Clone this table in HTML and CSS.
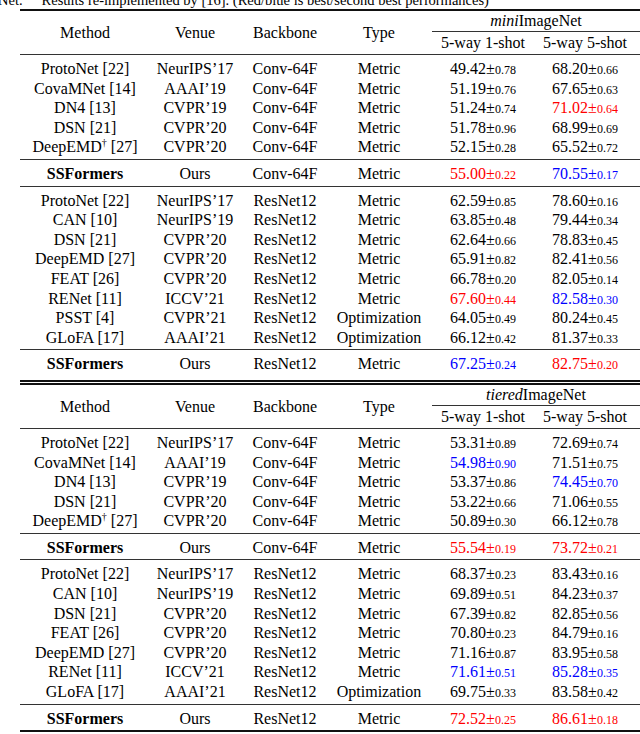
FILE: index.html
```html
<!DOCTYPE html>
<html lang="en">
<head>
<meta charset="utf-8">
<title>SSFormers results</title>
<link rel="stylesheet" href="styles.css">
</head>
<body>
<div class="caption">Net.&nbsp;&nbsp;&nbsp;<sup>†</sup> Results re-implemented by [16]. (Red/blue is best/second best performances)</div>
<table class="res">
  <colgroup>
    <col class="w1"><col class="w2"><col class="w3"><col class="w4"><col class="w5"><col class="w6">
  </colgroup>
  <thead class="head">
    <tr><th rowspan="2">Method</th><th rowspan="2">Venue</th><th rowspan="2">Backbone</th><th rowspan="2">Type</th><th colspan="2" class="dscell"><div class="dsname"><i>mini</i>ImageNet</div></th></tr>
    <tr class="sub"><th>5-way 1-shot</th><th class="c6">5-way 5-shot</th></tr>
  </thead>
  <tbody>
    <tr><td>ProtoNet [22]</td><td>NeurIPS’17</td><td>Conv-64F</td><td>Metric</td><td>49.42±<small>0.78</small></td><td class="c6">68.20±<small>0.66</small></td></tr>
    <tr><td>CovaMNet [14]</td><td>AAAI’19</td><td>Conv-64F</td><td>Metric</td><td>51.19±<small>0.76</small></td><td class="c6">67.65±<small>0.63</small></td></tr>
    <tr><td>DN4 [13]</td><td>CVPR’19</td><td>Conv-64F</td><td>Metric</td><td>51.24±<small>0.74</small></td><td class="c6 r">71.02±<small>0.64</small></td></tr>
    <tr><td>DSN [21]</td><td>CVPR’20</td><td>Conv-64F</td><td>Metric</td><td>51.78±<small>0.96</small></td><td class="c6">68.99±<small>0.69</small></td></tr>
    <tr><td>DeepEMD<sup>†</sup> [27]</td><td>CVPR’20</td><td>Conv-64F</td><td>Metric</td><td>52.15±<small>0.28</small></td><td class="c6">65.52±<small>0.72</small></td></tr>
  </tbody>
  <tbody>
    <tr><td><b>SSFormers</b></td><td>Ours</td><td>Conv-64F</td><td>Metric</td><td class="r">55.00±<small>0.22</small></td><td class="c6 b">70.55±<small>0.17</small></td></tr>
  </tbody>
  <tbody>
    <tr><td>ProtoNet [22]</td><td>NeurIPS’17</td><td>ResNet12</td><td>Metric</td><td>62.59±<small>0.85</small></td><td class="c6">78.60±<small>0.16</small></td></tr>
    <tr><td>CAN [10]</td><td>NeurIPS’19</td><td>ResNet12</td><td>Metric</td><td>63.85±<small>0.48</small></td><td class="c6">79.44±<small>0.34</small></td></tr>
    <tr><td>DSN [21]</td><td>CVPR’20</td><td>ResNet12</td><td>Metric</td><td>62.64±<small>0.66</small></td><td class="c6">78.83±<small>0.45</small></td></tr>
    <tr><td>DeepEMD [27]</td><td>CVPR’20</td><td>ResNet12</td><td>Metric</td><td>65.91±<small>0.82</small></td><td class="c6">82.41±<small>0.56</small></td></tr>
    <tr><td>FEAT [26]</td><td>CVPR’20</td><td>ResNet12</td><td>Metric</td><td>66.78±<small>0.20</small></td><td class="c6">82.05±<small>0.14</small></td></tr>
    <tr><td>RENet [11]</td><td>ICCV’21</td><td>ResNet12</td><td>Metric</td><td class="r">67.60±<small>0.44</small></td><td class="c6 b">82.58±<small>0.30</small></td></tr>
    <tr><td>PSST [4]</td><td>CVPR’21</td><td>ResNet12</td><td>Optimization</td><td>64.05±<small>0.49</small></td><td class="c6">80.24±<small>0.45</small></td></tr>
    <tr><td>GLoFA [17]</td><td>AAAI’21</td><td>ResNet12</td><td>Optimization</td><td>66.12±<small>0.42</small></td><td class="c6">81.37±<small>0.33</small></td></tr>
  </tbody>
  <tbody class="before-double">
    <tr><td><b>SSFormers</b></td><td>Ours</td><td>ResNet12</td><td>Metric</td><td class="b">67.25±<small>0.24</small></td><td class="c6 r">82.75±<small>0.20</small></td></tr>
  </tbody>
  <tbody class="head second">
    <tr><th rowspan="2">Method</th><th rowspan="2">Venue</th><th rowspan="2">Backbone</th><th rowspan="2">Type</th><th colspan="2" class="dscell"><div class="dsname"><i>tiered</i>ImageNet</div></th></tr>
    <tr class="sub"><th>5-way 1-shot</th><th class="c6">5-way 5-shot</th></tr>
  </tbody>
  <tbody>
    <tr><td>ProtoNet [22]</td><td>NeurIPS’17</td><td>Conv-64F</td><td>Metric</td><td>53.31±<small>0.89</small></td><td class="c6">72.69±<small>0.74</small></td></tr>
    <tr><td>CovaMNet [14]</td><td>AAAI’19</td><td>Conv-64F</td><td>Metric</td><td class="b">54.98±<small>0.90</small></td><td class="c6">71.51±<small>0.75</small></td></tr>
    <tr><td>DN4 [13]</td><td>CVPR’19</td><td>Conv-64F</td><td>Metric</td><td>53.37±<small>0.86</small></td><td class="c6 b">74.45±<small>0.70</small></td></tr>
    <tr><td>DSN [21]</td><td>CVPR’20</td><td>Conv-64F</td><td>Metric</td><td>53.22±<small>0.66</small></td><td class="c6">71.06±<small>0.55</small></td></tr>
    <tr><td>DeepEMD<sup>†</sup> [27]</td><td>CVPR’20</td><td>Conv-64F</td><td>Metric</td><td>50.89±<small>0.30</small></td><td class="c6">66.12±<small>0.78</small></td></tr>
  </tbody>
  <tbody>
    <tr><td><b>SSFormers</b></td><td>Ours</td><td>Conv-64F</td><td>Metric</td><td class="r">55.54±<small>0.19</small></td><td class="c6 r">73.72±<small>0.21</small></td></tr>
  </tbody>
  <tbody>
    <tr><td>ProtoNet [22]</td><td>NeurIPS’17</td><td>ResNet12</td><td>Metric</td><td>68.37±<small>0.23</small></td><td class="c6">83.43±<small>0.16</small></td></tr>
    <tr><td>CAN [10]</td><td>NeurIPS’19</td><td>ResNet12</td><td>Metric</td><td>69.89±<small>0.51</small></td><td class="c6">84.23±<small>0.37</small></td></tr>
    <tr><td>DSN [21]</td><td>CVPR’20</td><td>ResNet12</td><td>Metric</td><td>67.39±<small>0.82</small></td><td class="c6">82.85±<small>0.56</small></td></tr>
    <tr><td>FEAT [26]</td><td>CVPR’20</td><td>ResNet12</td><td>Metric</td><td>70.80±<small>0.23</small></td><td class="c6">84.79±<small>0.16</small></td></tr>
    <tr><td>DeepEMD [27]</td><td>CVPR’20</td><td>ResNet12</td><td>Metric</td><td>71.16±<small>0.87</small></td><td class="c6">83.95±<small>0.58</small></td></tr>
    <tr><td>RENet [11]</td><td>ICCV’21</td><td>ResNet12</td><td>Metric</td><td class="b">71.61±<small>0.51</small></td><td class="c6 b">85.28±<small>0.35</small></td></tr>
    <tr><td>GLoFA [17]</td><td>AAAI’21</td><td>ResNet12</td><td>Optimization</td><td>69.75±<small>0.33</small></td><td class="c6">83.58±<small>0.42</small></td></tr>
  </tbody>
  <tbody class="last">
    <tr><td><b>SSFormers</b></td><td>Ours</td><td>ResNet12</td><td>Metric</td><td class="r">72.52±<small>0.25</small></td><td class="c6 r">86.61±<small>0.18</small></td></tr>
  </tbody>
</table>
</body>
</html>
```

FILE: styles.css
```css
html, body {
  margin: 0;
  padding: 0;
  background: #fff;
  color: #000;
  font-family: "Liberation Serif", "Times New Roman", serif;
}

body {
  overflow: hidden;
}

.caption {
  font-size: 14.5px;
  line-height: 16px;
  margin-top: -8px;
  margin-left: -2px;
  white-space: nowrap;
}

.caption sup {
  font-size: 9px;
  line-height: 0;
}

.res {
  margin: 1px 0 0 20px;
  width: 620px;
  table-layout: fixed;
  border-collapse: collapse;
  font-size: 16px;
}

.w1 { width: 130px; }
.w2 { width: 90px; }
.w3 { width: 90px; }
.w4 { width: 98px; }
.w5 { width: 110px; }
.w6 { width: 102px; }

.res td,
.res th {
  padding: 0;
  text-align: center;
  font-weight: normal;
  line-height: 19.6px;
  white-space: nowrap;
}

.res .c6 {
  padding-right: 8px;
}

.res thead {
  border-top: 2px solid #111;
}

.res tbody {
  border-top: 1px solid #333;
}

.res tbody.last {
  border-bottom: 2px solid #111;
}

.res tbody.second {
  border-top: 5px double #111;
}

.res tbody tr:first-child td {
  padding-top: 4px;
}

.res tbody tr:last-child td {
  padding-bottom: 2px;
}

.res tbody.before-double tr:last-child td {
  padding-bottom: 6px;
}

.res .head th {
  line-height: 21px;
}

.res .head .sub th {
  line-height: 22px;
}

.dsname {
  margin-left: 4px;
  line-height: 20px;
  border-bottom: 1px solid #333;
}

.res small {
  font-size: 12px;
  line-height: 0;
}

.res sup {
  font-size: 10px;
  line-height: 0;
}

.r { color: #ff0000; }
.b { color: #0000ff; }
```
